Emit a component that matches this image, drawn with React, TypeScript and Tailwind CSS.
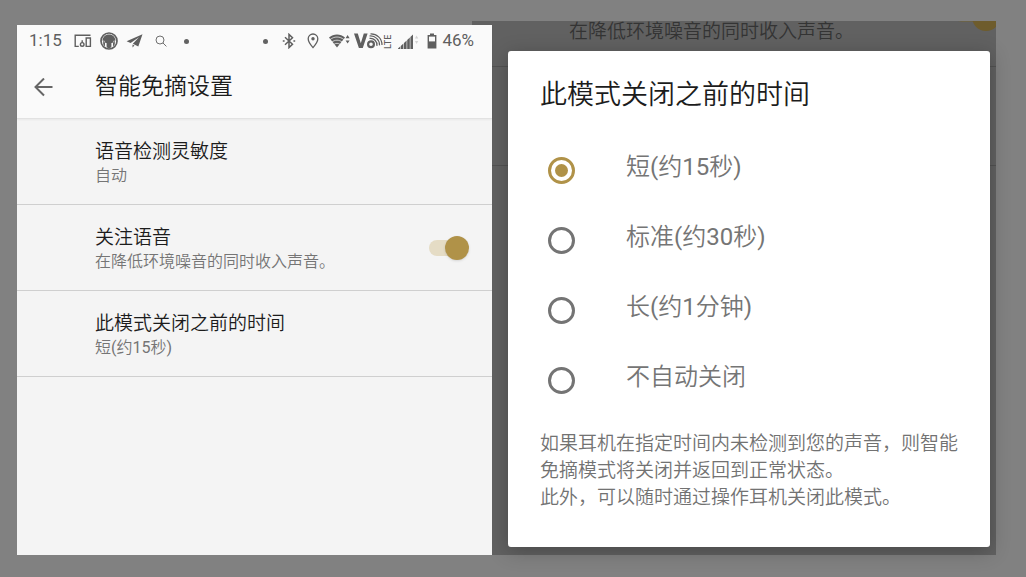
import { useState } from "react";

const settings = [
  { id: "sensitivity", title: "语音检测灵敏度", summary: "自动" },
  {
    id: "voice",
    title: "关注语音",
    summary: "在降低环境噪音的同时收入声音。",
    toggle: true,
  },
  { id: "timeout", title: "此模式关闭之前的时间", summary: "短(约15秒)" },
];

const options = [
  { value: "short", label: "短(约15秒)" },
  { value: "standard", label: "标准(约30秒)" },
  { value: "long", label: "长(约1分钟)" },
  { value: "never", label: "不自动关闭" },
];

function Dot() {
  return <span className="size-[5px] rounded-full bg-[#626262]" />;
}

function StatusBar() {
  return (
    <div className="flex h-8 items-center justify-between pr-[18px] pl-3 text-[#5f5f5f]">
      <div className="flex items-center">
        <span className="mr-2 text-[17px]">1:15</span>
        <span className="flex w-[26px] justify-center">
          <svg width="18" height="14" viewBox="0 0 18 14" fill="none" stroke="currentColor" strokeWidth="1.4">
            <path d="M16.5 1.2H1.2v11.2h3.6" />
            <path d="M12.2 4h4.2v8.4h-4.2z" />
            <circle cx="8.2" cy="10.4" r="1.8" />
            <path d="M8.2 8.6V6.2" />
          </svg>
        </span>
        <span className="flex w-[26px] justify-center">
          <svg width="18" height="18" viewBox="0 0 18 18">
            <circle cx="9" cy="9" r="8" fill="none" stroke="currentColor" strokeWidth="1.7" />
            <path
              d="M9 2.600C5.200 2.600 2.600 5.300 2.600 8.800h1.700c.2 1.500 1.100 2.300 2.300 2.300v3.400c0 .9.800 1.500 2.400 1.500s2.400-.6 2.400-1.500v-3.400c1.200 0 2.100-.8 2.300-2.300h1.700c0-3.500-2.600-6.200-6.400-6.200z"
              fill="currentColor"
            />
            <path d="M3.200 8.600v3.600c.4.900 1 1.500 1.800 2V10.800zM14.800 8.600v3.600c-.4.900-1 1.500-1.800 2V10.800z" fill="currentColor" />
          </svg>
        </span>
        <span className="flex w-[26px] justify-center">
          <svg width="17" height="14" viewBox="0 0 17 14" fill="currentColor">
            <path d="M16.500.3.600 7.200l4 1.700L13 3.300 6.800 9.800l5.500 2.600z" />
            <path d="M6.500 10.600v3l2-2z" />
          </svg>
        </span>
        <span className="flex w-[26px] justify-center">
          <svg width="12" height="12" viewBox="0 0 12 12" fill="none" stroke="currentColor" strokeWidth=".9">
            <circle cx="5" cy="5" r="4" />
            <path d="m8 8 3.400 3.400" />
          </svg>
        </span>
        <span className="flex w-[26px] justify-center">
          <Dot />
        </span>
      </div>

      <div className="flex items-center">
        <span className="flex w-6 justify-center">
          <Dot />
        </span>
        <span className="flex w-6 justify-center">
          <svg width="14" height="16" viewBox="0 0 14 16" fill="none" stroke="currentColor" strokeWidth="1.500">
            <path d="m3 4.200 7.500 7L7 14.600V1.400l3.500 3.400-7.500 7" />
            <path d="M.8 8h1.800M11.400 8h1.800" />
          </svg>
        </span>
        <span className="flex w-6 justify-center">
          <svg width="12" height="16" viewBox="0 0 12 16" fill="none" stroke="currentColor" strokeWidth="1.300">
            <path d="M6 1a4.800 4.800 0 0 0-4.800 4.800C1.200 9.200 6 14.600 6 14.600s4.800-5.400 4.800-8.800A4.800 4.800 0 0 0 6 1z" />
            <circle cx="6" cy="5.800" r="1.700" fill="currentColor" stroke="none" />
          </svg>
        </span>
        <svg className="ml-1" width="21" height="14" viewBox="0 0 21 14">
          <path d="M0 3.400C4.500-.6 11.500-.6 16 3.400L8 13.400z" fill="currentColor" />
          <g fill="none" stroke="#fafafa" strokeWidth=".7">
            <path d="M.8 5.800c4.300-3.700 10.100-3.700 14.400 0" />
            <path d="M2.600 8.300c3.200-2.800 7.600-2.800 10.800 0" />
            <path d="M4.500 10.700c2.100-1.800 4.900-1.800 7 0" />
          </g>
          <path d="m18.600 1 2 3.200h-4zM18.600 9.600l2-3.200h-4z" fill="currentColor" />
        </svg>
        <svg className="ml-1" width="38" height="16" viewBox="0 0 38 16">
          <path d="M0 .6h3.800l3 9.600L9.800.6h3.800L8.800 15H4.900z" fill="currentColor" />
          <g fill="none" stroke="currentColor">
            <circle cx="17" cy="11.200" r="2.900" strokeWidth="2.200" />
            <path d="M15.500 5.400a6.500 6.500 0 0 1 7.400 7.400" strokeWidth="1.300" />
            <path d="M15.500 3a9 9 0 0 1 10 9.400" strokeWidth="1.200" />
            <path d="M16.500.9a11 11 0 0 1 11.500 11" strokeWidth="1.200" />
          </g>
          <text
            transform="translate(36.800 16) rotate(-90)"
            fontSize="9"
            fontWeight="500"
            fill="currentColor"
          >
            LTE
          </text>
        </svg>
        <svg className="ml-1.5" width="21" height="15" viewBox="0 0 21 15" fill="currentColor">
          <path d="M0 15h2.200v-2.400L0 14.600zM2.800 15h2.600V9.600L2.800 12zM6 15h2.600V6.600L6 9zM9.200 15h2.600V3.600L9.200 6zM12.400 15H15V.6L12.400 3z" />
          <path d="m18.600 1.500 1.600 3H17zM18.600 10l1.600-3H17z" opacity=".25" />
        </svg>
        <svg className="ml-2" width="10" height="16" viewBox="0 0 10 16">
          <path d="M3 .6h4V2h2.400v13.400H.6V2H3z" fill="currentColor" />
          <path d="M2 3.600h6v4.800H2z" fill="#fafafa" />
        </svg>
        <span className="ml-[5px] text-[17px]">46%</span>
      </div>
    </div>
  );
}

export default function App() {
  const [attention, setAttention] = useState(true);
  const [selected, setSelected] = useState("short");

  return (
    <div className="flex min-h-screen items-start bg-[#818181] font-['Roboto','Noto_Sans_CJK_SC_DemiLight','Noto_Sans_CJK_SC',sans-serif]">
      <div className="flex flex-1 pt-[21px] pr-[30px] pl-[17px]">
        {/* Settings screen */}
        <main className="z-10 mt-1 min-w-0 flex-[475] bg-[#f4f4f4]">
          <header className="border-b border-[#e2e2e2] bg-[#fafafa] shadow-xs">
            <StatusBar />
            <div className="flex h-[61px] items-center pl-4">
              <button aria-label="返回" className="mr-[41px] text-[#666]">
                <svg width="21" height="20" viewBox="0 0 21 20" fill="none" stroke="currentColor" strokeWidth="2">
                  <path d="M19.500 9H3M11 .5 2.500 9l8.500 8.500" />
                </svg>
              </button>
              <h1 className="text-[23px] text-[#1c1c1c]">智能免摘设置</h1>
            </div>
          </header>

          <ul>
            {settings.map((item) => (
              <li key={item.id} className="border-b border-[#cfcfcf]">
                {item.toggle ? (
                  <label className="flex items-center justify-between pr-[23px] pl-[78px]">
                    <span className="pt-[21px] pb-4">
                      <span className="block text-[19px] leading-6 text-[#1c1c1c]">{item.title}</span>
                      <span className="block text-base leading-6 text-[#757575]">{item.summary}</span>
                    </span>
                    <span className="relative flex h-6 w-10 items-center">
                      <input
                        type="checkbox"
                        role="switch"
                        className="peer h-4 w-9 appearance-none rounded-full bg-[#d0d0d0] checked:bg-[#e5dcc5]"
                        checked={attention}
                        onChange={(e) => setAttention(e.target.checked)}
                      />
                      <span className="pointer-events-none absolute left-0 size-6 rounded-full bg-white shadow peer-checked:left-4 peer-checked:bg-[#b09248]" />
                    </span>
                  </label>
                ) : (
                  <button className="block w-full pt-[21px] pb-4 pl-[78px] text-left">
                    <span className="block text-[19px] leading-6 text-[#1c1c1c]">{item.title}</span>
                    <span className="block text-base leading-6 text-[#757575]">{item.summary}</span>
                  </button>
                )}
              </li>
            ))}
          </ul>
        </main>

        {/* Dimmed screen with the dialog over it */}
        <section className="relative -ml-5 min-w-0 flex-[482] bg-[#616161] pt-[30px] pr-1.5 pb-2 pl-9">
          <div className="absolute inset-0" aria-hidden="true">
            <div className="flex h-[46px] items-start justify-between border-b border-[#525252] pl-[97px]">
              <span className="text-[19px] leading-[22px] text-[#343434]">在降低环境噪音的同时收入声音。</span>
              <svg width="38" height="12" viewBox="0 0 38 12">
                <path d="M0 0h20v1H4z" fill="#6b6349" />
                <circle cx="28" cy="-4" r="14" fill="#6e5c2c" />
              </svg>
            </div>
            <div className="h-[99px] border-b border-[#525252]" />
          </div>

          <form
            role="dialog"
            aria-labelledby="dialog-title"
            className="relative rounded-[3px] bg-white pt-[26px] pr-6 pb-9 pl-8 shadow-[0_4px_20px_rgba(0,0,0,0.25)]"
          >
            <h2 id="dialog-title" className="text-[27px] leading-9 text-[#1c1c1c]">
              此模式关闭之前的时间
            </h2>
            <div role="radiogroup" aria-labelledby="dialog-title" className="mt-[22px] pl-2">
              {options.map((option) => (
                <label key={option.value} className="flex h-[70px] items-center gap-[51px]">
                  <input
                    type="radio"
                    name="timeout"
                    value={option.value}
                    checked={selected === option.value}
                    onChange={() => setSelected(option.value)}
                    className="grid size-[27px] appearance-none place-content-center rounded-full border-[3px] border-[#747474] before:size-[13px] before:rounded-full checked:border-[#b09248] checked:before:bg-[#b09248]"
                  />
                  <span className="pb-1.5 text-2xl text-[#757575]">{option.label}</span>
                </label>
              ))}
            </div>
            <p className="mt-[15px] text-[19px] leading-[27px] text-[#727272]">
              如果耳机在指定时间内未检测到您的声音，则智能免摘模式将关闭并返回到正常状态。
              <br />
              此外，可以随时通过操作耳机关闭此模式。
            </p>
          </form>
        </section>
      </div>
    </div>
  );
}
